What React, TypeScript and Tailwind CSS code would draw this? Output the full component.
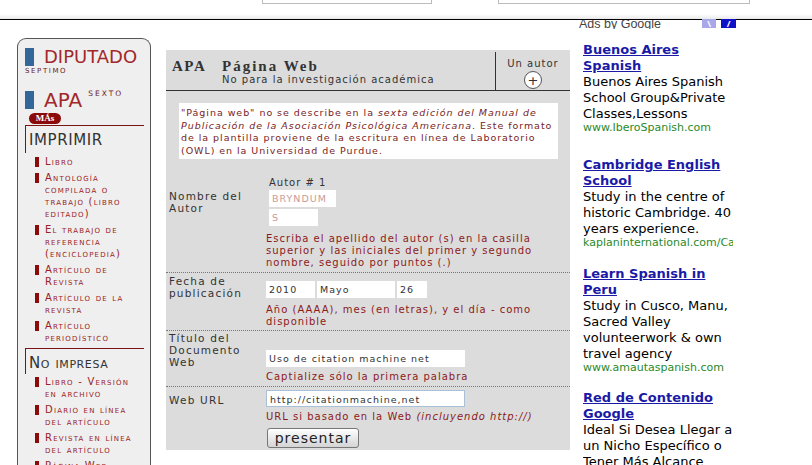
import React from 'react';

const sideFont = { fontFamily: '"DejaVu Sans", Verdana, sans-serif' };

const imprimir = [
  'Libro',
  'Antología compilada o trabajo (libro editado)',
  'El trabajo de referencia (enciclopedia)',
  'Artículo de Revista',
  'Artículo de la revista',
  'Artículo periodístico',
];

const noImpresa = [
  'Libro - Versión en archivo',
  'Diario en línea del artículo',
  'Revista en línea del artículo',
  'Página Web',
];

const ads = [
  {
    title: 'Buenos Aires Spanish',
    desc: 'Buenos Aires Spanish School Group&Private Classes,Lessons',
    url: 'www.IberoSpanish.com',
    gap: 'mb-[23px]',
  },
  {
    title: 'Cambridge English School',
    desc: 'Study in the centre of historic Cambridge. 40 years experience.',
    url: 'kaplaninternational.com/Cambridge',
    gap: 'mb-[17px]',
  },
  {
    title: 'Learn Spanish in Peru',
    desc: 'Study in Cusco, Manu, Sacred Valley volunteerwork & own travel agency',
    url: 'www.amautaspanish.com',
    gap: 'mb-[16px]',
  },
  {
    title: 'Red de Contenido Google',
    desc: 'Ideal Si Desea Llegar a un Nicho Específico o Tener Más Alcance',
    url: 'www.google.com',
    gap: 'mb-[16px]',
  },
];

function SideItem({ text }: { text: string }) {
  return (
    <div className="flex items-start gap-[6px] mb-[4px]">
      <div className="w-[4px] h-[10px] mt-[1px] bg-[#8b0a0a] shrink-0" />
      <div className="text-[10px] leading-[12px] tracking-[1.2px] text-[#9a2424] [font-variant:small-caps]">{text}</div>
    </div>
  );
}

function SideHeading({ text, caps, box }: { text: string; caps?: boolean; box: string }) {
  return (
    <div className={`border-t border-l border-[#7a1414] pl-[3px] pt-[6px] ${box}`}>
      <div className={`text-[15px] leading-[16px] tracking-[0.6px] text-[#333] ${caps ? '[font-variant:small-caps]' : ''}`}>{text}</div>
    </div>
  );
}

function Sidebar() {
  return (
    <div className="w-[134px] h-[430px] mt-[18px] ml-[17px] shrink-0 bg-[#efefef] border border-[#555] border-b-0 rounded-t-[9px] pl-[7px] pr-[6px] pt-[8px] overflow-hidden" style={sideFont}>
      <div className="flex items-start gap-[10px]">
        <div className="w-[9px] h-[18px] bg-[#336699] mt-[1px]" />
        <div className="text-[18px] leading-[20px] text-[#a3282a]">DIPUTADO</div>
      </div>
      <div className="text-[7px] leading-[8px] tracking-[1.6px] text-[#6b1a1a]">SEPTIMO</div>
      <div className="flex items-start gap-[10px] mt-[15px]">
        <div className="w-[9px] h-[18px] bg-[#336699] mt-[1px]" />
        <div className="text-[20px] leading-[20px] text-[#a3282a]">APA</div>
        <div className="text-[7.5px] leading-[8px] tracking-[2px] text-[#6b1a1a] ml-[-4px] mt-[0px]">SEXTO</div>
      </div>
      <div className="ml-[4px] mt-[3px] w-[32px] h-[11px] rounded-full bg-[#8b0a0a] text-white text-[9px] leading-[11px] text-center font-bold" style={{ fontFamily: '"Liberation Serif", serif' }}>MÁs</div>
      <div className="mt-[1px]">
        <SideHeading text="IMPRIMIR" box="h-[28px] mb-[3px]" />
        <div className="pl-[10px]">
          {imprimir.map((t) => (
            <SideItem key={t} text={t} />
          ))}
        </div>
        <SideHeading text="No impresa" caps box="h-[26px] mb-[2px]" />
        <div className="pl-[10px]">
          {noImpresa.map((t) => (
            <SideItem key={t} text={t} />
          ))}
        </div>
      </div>
    </div>
  );
}

const formFont = { fontFamily: '"DejaVu Sans", Verdana, sans-serif' };

function Label({ children, pt }: { children: React.ReactNode; pt: string }) {
  return (
    <div className={`w-[100px] shrink-0 pl-[3px] pr-[10px] ${pt} text-[10.5px] leading-[12px] tracking-[1.2px] text-[#333]`}>{children}</div>
  );
}

function Help({ children, mt }: { children: React.ReactNode; mt: string }) {
  return <div className={`${mt} text-[10px] leading-[12px] tracking-[1px] text-[#8b1a1a] pr-[28px]`}>{children}</div>;
}

function Input({ value, w, className = '' }: { value: string; w: string; className?: string }) {
  return (
    <div className={`${w} h-[17px] bg-white px-[3px] text-[9.5px] leading-[17px] tracking-[1px] whitespace-nowrap overflow-hidden ${className}`}>{value}</div>
  );
}

function MainForm() {
  return (
    <div className="w-[404px] ml-[15px] mt-[30px] shrink-0 bg-[#dcdcdc] h-[400px]" style={formFont}>
      <div className="flex h-[41px] border-b border-[#333]">
        <div className="flex-1 pl-[6px] pt-[9px]">
          <div className="flex items-baseline" style={{ fontFamily: '"Liberation Serif", serif' }}>
            <span className="w-[50px] text-[15px] leading-[15px] font-bold tracking-[1.5px] text-[#333]">APA</span>
            <span className="text-[15px] leading-[15px] font-bold tracking-[2px] text-[#333]">Página Web</span>
          </div>
          <div className="pl-[50px] text-[10px] leading-[12px] tracking-[1px] text-[#333]">No para la investigación académica</div>
        </div>
        <div className="w-[75px] border-l border-[#333] mt-[2px] flex flex-col items-center pt-[6px]">
          <div className="text-[10px] leading-[12px] tracking-[1px] text-[#333]">Un autor</div>
          <div className="mt-[1px] w-[18px] h-[18px] rounded-full bg-white border border-[#555] flex items-center justify-center text-[13px] leading-none text-[#333]">+</div>
        </div>
      </div>

      <div className="ml-[13px] mr-[12px] mt-[12px] h-[56px] bg-white px-[2px] pt-[4px] text-[9.5px] leading-[12.5px] tracking-[0.95px] text-[#7a1c1c] whitespace-nowrap">
        "Página web" no se describe en la <i>sexta edición del Manual de</i>
        <br />
        <i>Publicación de la Asociación Psicológica Americana</i>. Este formato
        <br />
        de la plantilla proviene de la escritura en línea de Laboratorio
        <br />
        (OWL) en la Universidad de Purdue.
      </div>

      <div className="flex border-b border-dotted border-[#777] pb-[3px]">
        <Label pt="pt-[31px]">Nombre del Autor</Label>
        <div className="flex-1">
          <div className="pt-[18px] pl-[3px] text-[10px] leading-[12px] tracking-[1px] text-[#333]">Autor # 1</div>
          <Input value="BRYNDUM" w="w-[67px]" className="ml-[3px] mt-[1px] h-[16px] leading-[16px] text-[#c99a9a]" />
          <Input value="S" w="w-[49px]" className="ml-[3px] mt-[2px] h-[16px] leading-[16px] text-[#c99a9a]" />
          <Help mt="mt-[7px]">Escriba el apellido del autor (s) en la casilla superior y las iniciales del primer y segundo nombre, seguido por puntos (.)</Help>
        </div>
      </div>

      <div className="flex border-b border-dotted border-[#777] pb-[2px]">
        <Label pt="pt-[2px]">Fecha de publicación</Label>
        <div className="flex-1">
          <div className="flex gap-[2px] pt-[8px]">
            <Input value="2010" w="w-[49px]" className="text-[#333]" />
            <Input value="Mayo" w="w-[78px]" className="text-[#333]" />
            <Input value="26" w="w-[30px]" className="text-[#333]" />
          </div>
          <Help mt="mt-[6px]">Año (AAAA), mes (en letras), y el día - como disponible</Help>
        </div>
      </div>

      <div className="flex border-b border-dotted border-[#777] pb-[3px]">
        <Label pt="pt-[1px]">Título del Documento Web</Label>
        <div className="flex-1">
          <div className="pt-[19px]">
            <Input value="Uso de citation machine net" w="w-[199px]" className="text-[#333]" />
          </div>
          <Help mt="mt-[4px]">Captialize sólo la primera palabra</Help>
        </div>
      </div>

      <div className="flex pb-[4px]">
        <Label pt="pt-[7px]">Web URL</Label>
        <div className="flex-1">
          <div className="pt-[3px]">
            <Input value="http://citationmachine,net" w="w-[199px]" className="text-[#333] border border-[#a9c0d6] leading-[15px]" />
          </div>
          <Help mt="mt-[4px]">
            URL si basado en la Web <i>(incluyendo http://)</i>
          </Help>
          <button className="mt-[5px] ml-[1px] w-[92px] h-[20px] rounded-[3px] border border-[#777] bg-gradient-to-b from-white to-[#d4d4d4] text-[14px] leading-[18px] tracking-[1px] text-[#222]" style={formFont}>
            presentar
          </button>
        </div>
      </div>
    </div>
  );
}

function Ads() {
  return (
    <div className="ml-[13px] w-[160px] shrink-0" style={formFont}>
      <div className="h-[10px] overflow-hidden flex items-end ml-[-4px] w-[100px]">
        <div className="text-[12.5px] leading-[14px] text-[#444] mb-[-2px]" style={{ fontFamily: '"Liberation Sans", Arial, sans-serif' }}>
          Ads by Google
        </div>
      </div>
      <div className="pt-[13px] w-[150px] overflow-hidden">
        {ads.map((ad) => (
          <div key={ad.title} className={ad.gap}>
            <div className="text-[13px] leading-[16px] font-bold text-[#1a1aa6] underline">{ad.title}</div>
            <div className="text-[13px] leading-[16px] text-black">{ad.desc}</div>
            <div className="text-[11px] leading-[12px] text-[#2a8a2a] whitespace-nowrap">{ad.url}</div>
          </div>
        ))}
      </div>
    </div>
  );
}

export default function App() {
  return (
    <div className="w-[812px] h-[465px] bg-white overflow-hidden relative">
      <div className="relative z-10 h-[20px] bg-white border-b border-black">
        <div className="flex h-[14px]">
          <div className="ml-[262px] w-[170px] h-[4px] border border-t-0 border-[#bbb] rounded-b-[1px]" />
          <div className="ml-[66px] w-[252px] h-[4px] border border-t-0 border-[#bbb] rounded-b-[1px]" />
        </div>
        <div className="h-[5px] bg-gradient-to-b from-white to-[#eaeaea]" />
      </div>
      <div className="flex">
        <Sidebar />
        <MainForm />
        <div className="flex flex-col">
          <div className="flex gap-[5px] ml-[132px] mt-[-1px] h-0 relative z-20">
            <div className="w-[14px] h-[9px] bg-[#a8a8e8] flex items-center justify-center text-white text-[9px] leading-none font-bold">\</div>
            <div className="w-[15px] h-[9px] bg-[#1010c8] flex items-center justify-center text-white text-[9px] leading-none font-bold">/</div>
          </div>
          <Ads />
        </div>
      </div>
    </div>
  );
}
